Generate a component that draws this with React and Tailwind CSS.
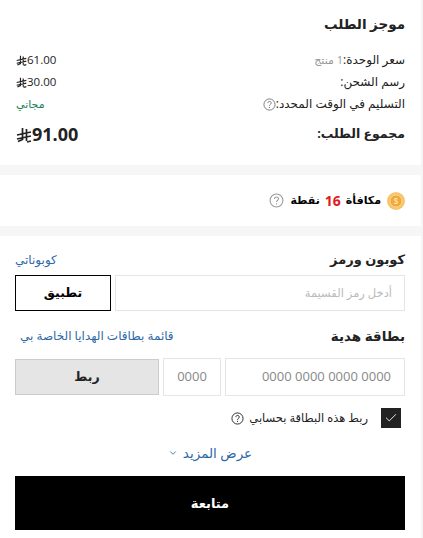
import { ChevronDown, Check } from 'lucide-react';

function Riyal({ className }) {
  return (
    <svg viewBox="0 0 16 16" className={className} fill="none" stroke="currentColor" strokeWidth="1.7">
      <path d="M6.5 1V12.5L2 14.5M10.5 2V14M1 8L15 5M1 12L15 9M11 15L15 14" />
    </svg>
  );
}

function Help({ className }) {
  return (
    <svg viewBox="0 0 14 14" className={className} fill="none" stroke="currentColor">
      <circle cx="7" cy="7" r="6" />
      <path d="M5.2 5.5C5.2 3 8.9 3.2 8.9 5.4C8.9 6.8 7 6.9 7 8.4" />
      <path d="M7 9.6V10.8" />
    </svg>
  );
}

function Coin() {
  return (
    <svg viewBox="0 0 18 18" className="h-[18px] w-[18px] shrink-0">
      <circle cx="9" cy="9" r="9" fill="#f8c46a" />
      <circle cx="9" cy="9" r="6" fill="#f2a93c" stroke="#fbd48c" />
      <text x="9" y="12" fontSize="8" textAnchor="middle" fill="#fde6b0" fontWeight="700">S</text>
    </svg>
  );
}

function PriceRow({ label, children }) {
  return (
    <div className="flex h-[22px] items-center justify-between">
      <div className="flex items-center text-[12px] text-[#222]">{label}</div>
      {children}
    </div>
  );
}

function Price({ value }) {
  return (
    <div dir="ltr" className="flex items-center text-[11.5px] text-[#222]">
      <Riyal className="h-[11px] w-[11px]" />
      <span>{value}</span>
    </div>
  );
}

export default function App() {
  return (
    <div dir="rtl" className="h-[538px] w-[423px] overflow-hidden border-r-[2px] border-[#f5f5f5] bg-white font-['Open_Sans','DejaVu_Sans',sans-serif]">
      <div className="h-[165px] pr-[16px] pl-[16px] pt-[12px]">
        <h2 className="text-[13.5px] leading-[24px] font-bold text-[#222]">موجز الطلب</h2>
        <div className="mt-[13px]">
          <PriceRow label={<><span>سعر الوحدة:</span><span className="text-[11px] text-[#999]">1 منتج</span></>}>
            <Price value="61.00" />
          </PriceRow>
          <PriceRow label="رسم الشحن:">
            <Price value="30.00" />
          </PriceRow>
          <PriceRow label={<><span>التسليم في الوقت المحدد:</span><Help className="h-[13px] w-[13px] text-[#767676]" /></>}>
            <span className="text-[11px] text-[#198055]">مجاني</span>
          </PriceRow>
        </div>
        <div className="mt-[6px] flex items-center justify-between">
          <span className="text-[12.5px] font-bold text-[#222]">مجموع الطلب:</span>
          <div dir="ltr" className="flex items-center text-[18px] font-bold text-[#222]">
            <Riyal className="h-[16px] w-[16px]" />
            <span>91.00</span>
          </div>
        </div>
      </div>
      <div className="h-[10px] bg-[#f6f6f6]" />
      <div className="flex h-[51px] items-center gap-[4px] pr-[16px] text-[11px] font-bold text-black">
        <Coin />
        <span className="mr-[2px]">مكافأة</span>
        <span className="mx-[1px] text-[14px] text-[#e01b1b]">16</span>
        <span>نقطة</span>
        <Help className="mr-[2px] h-[15px] w-[15px] font-normal text-[#999]" />
      </div>
      <div className="h-[10px] bg-[#f6f6f6]" />
      <div className="pr-[16px] pl-[15px] pt-[12px]">
        <div className="flex h-[24px] items-center justify-between">
          <span className="text-[13px] font-bold text-[#222]">كوبون ورمز</span>
          <a className="text-[12px] text-[#2d68a8]">كوبوناتي</a>
        </div>
        <div className="mt-[3px] flex gap-[4px]">
          <div className="flex h-[36px] flex-1 items-center border border-[#e5e5e5] px-[12px] text-[11.5px] text-[#bbb]">أدخل رمز القسيمة</div>
          <button className="h-[36px] w-[96px] border border-black text-[12.5px] font-bold text-black">تطبيق</button>
        </div>
        <div className="mt-[13px] flex h-[24px] items-center justify-between">
          <span className="text-[13.5px] font-bold text-[#222]">بطاقة هدية</span>
          <a className="pl-[5px] text-[12px] text-[#2d68a8]">قائمة بطاقات الهدايا الخاصة بي</a>
        </div>
        <div className="mt-[10px] flex items-center gap-[4px]">
          <div dir="ltr" className="flex h-[38px] w-[180px] items-center justify-end border border-[#e5e5e5] px-[13px] text-[13px] text-[#888]">0000 0000 0000 0000</div>
          <div dir="ltr" className="flex h-[38px] w-[58px] items-center justify-center border border-[#e5e5e5] text-[13px] text-[#888]">0000</div>
          <button className="h-[36px] flex-1 border border-[#ccc] bg-[#e5e5e5] text-[12.5px] font-bold text-[#222]">ربط</button>
        </div>
        <div className="mt-[12px] flex items-center pr-[4px]">
          <span className="flex h-[20px] w-[20px] items-center justify-center bg-[#222] text-white"><Check size={14} strokeWidth={1.5} /></span>
          <span className="mr-[13px] text-[11.5px] text-[#222]">ربط هذه البطاقة بحسابي</span>
          <Help className="mr-[5px] h-[13px] w-[13px] text-[#222]" />
        </div>
        <div className="mt-[15px] flex items-center justify-center gap-[5px] text-[13.5px] text-[#2d68a8]">
          <span>عرض المزيد</span>
          <ChevronDown size={10} />
        </div>
        <button className="mt-[13px] h-[54px] w-full bg-black text-[13px] font-bold text-white">متابعة</button>
      </div>
    </div>
  );
}
